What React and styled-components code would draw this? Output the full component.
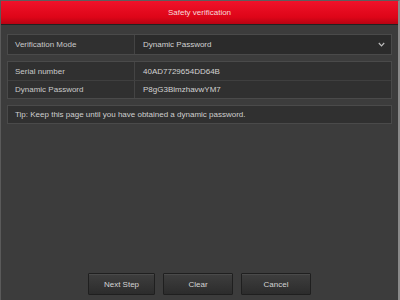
import React from 'react';
import styled, { createGlobalStyle } from 'styled-components';

// --------------------- Styling ----------------------------------------

const Global = createGlobalStyle`
  html, body {
    margin: 0;
    padding: 0;
    background: #3a3a3a;
  }
  * { box-sizing: border-box; }
`;

const Frame = styled.div`
  width: 400px;
  height: 300px;
  display: flex;
  flex-direction: column;
  background: #3c3c3c;
  border-left: 1px solid #5a5a5a;
  border-right: 2px solid #8a8a8a;
  border-top: 1px solid #5e5e5e;
  font-family: "Liberation Sans", Arial, sans-serif;
  font-size: 8px;
  color: #cfcfcf;
`;

const Header = styled.div`
  height: 24px;
  display: flex;
  align-items: center;
  justify-content: center;
  background: linear-gradient(#f0122a, #de0518 70%, #b80313);
  border-bottom: 1px solid #222;
  color: #f6dada;
  font-size: 8px;
`;

const Body = styled.div`
  flex: 1;
  display: flex;
  flex-direction: column;
  padding: 9px 6px 0 6px;
  gap: 6px;
`;

const Box = styled.div`
  display: flex;
  flex-direction: column;
  border: 1px solid #4a4a4a;
  background: #303030;
`;

const Row = styled.div`
  display: flex;
  height: ${(p) => p.h || 18}px;
  & + & {
    border-top: 1px solid #3f3f3f;
  }
`;

const Label = styled.div`
  width: 127px;
  display: flex;
  align-items: center;
  padding-left: 7px;
  border-right: 1px solid #444;
  color: #c9c9c9;
`;

const Value = styled.div`
  flex: 1;
  display: flex;
  align-items: center;
  justify-content: space-between;
  padding: 0 6px 0 8px;
  background: ${(p) => (p.dark ? '#2b2b2b' : '#303030')};
  color: #d2d2d2;
`;

const Chevron = styled.svg`
  width: 7px;
  height: 5px;
`;

const Tip = styled.div`
  height: 19px;
  display: flex;
  align-items: center;
  padding-left: 7px;
  border: 1px solid #4a4a4a;
  background: #303030;
  color: #cfcfcf;
`;

const Footer = styled.div`
  margin-top: auto;
  display: flex;
  justify-content: center;
  gap: 8px;
  padding: 0 0 5px 0;
`;

const Button = styled.button`
  width: ${(p) => p.w || 70}px;
  height: 22px;
  border: 1px solid #1f1f1f;
  border-radius: 1px;
  background: linear-gradient(#3e3e3e, #2c2c2c);
  box-shadow: inset 0 1px 0 #4a4a4a;
  color: #d4d4d4;
  font-family: "Liberation Sans", Arial, sans-serif;
  font-size: 8px;
  padding: 0;
`;

// ------------------------------------ COMPONENT -------------------------------
export default function App() {
  return (
    <Frame>
      <Global />
      <Header>Safety verification</Header>
      <Body>
        <Box>
          <Row h={19}>
            <Label>Verification Mode</Label>
            <Value dark>
              Dynamic Password
              <Chevron viewBox="0 0 7 5">
                <path d="M0.8 1 L3.5 3.8 L6.2 1" fill="none" stroke="#bdbdbd" strokeWidth="1.2" />
              </Chevron>
            </Value>
          </Row>
        </Box>
        <Box>
          <Row>
            <Label>Serial number</Label>
            <Value>40AD7729654DD64B</Value>
          </Row>
          <Row>
            <Label>Dynamic Password</Label>
            <Value>P8gG3BlmzhavwYM7</Value>
          </Row>
        </Box>
        <Tip>Tip: Keep this page until you have obtained a dynamic password.</Tip>
        <Footer>
          <Button w={67}>Next Step</Button>
          <Button>Clear</Button>
          <Button>Cancel</Button>
        </Footer>
      </Body>
    </Frame>
  );
}
